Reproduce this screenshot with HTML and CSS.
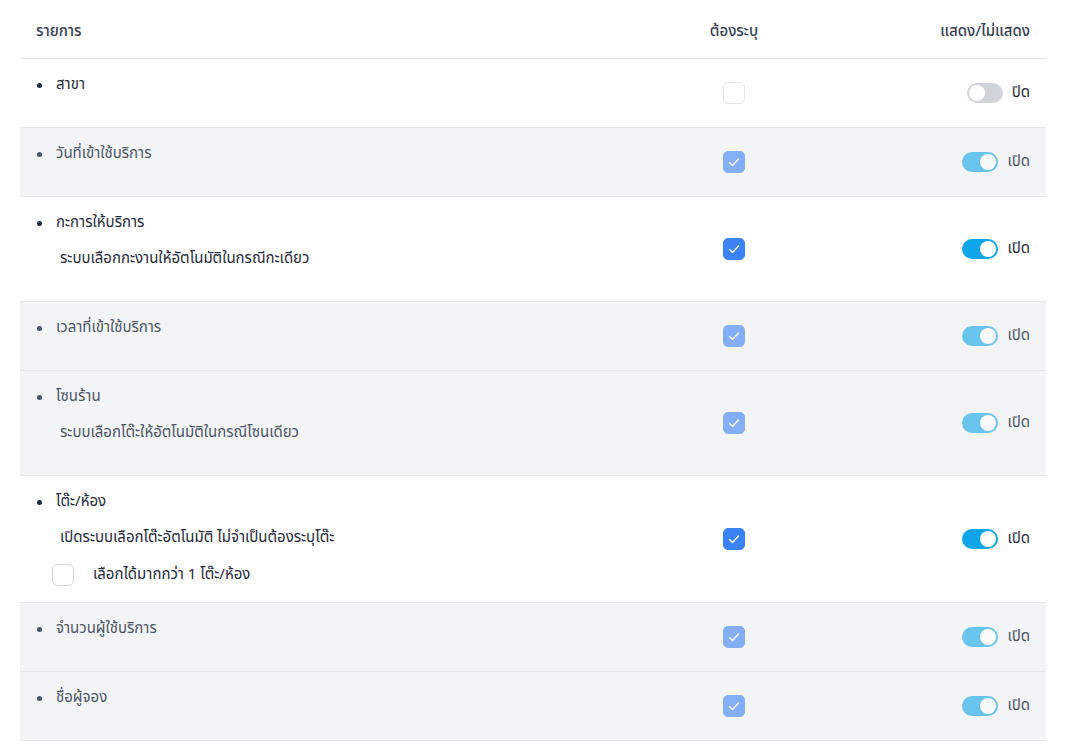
FILE: index.html
```html
<!DOCTYPE html>
<html lang="th">
<head>
<meta charset="utf-8">
<title>ตั้งค่าฟิลด์</title>
<link rel="stylesheet" href="styles.css">
</head>
<body>
<div class="table">
  <div class="row head">
    <div class="cell name">รายการ</div>
    <div class="cell req">ต้องระบุ</div>
    <div class="cell show">แสดง/ไม่แสดง</div>
  </div>

  <div class="row">
    <div class="cell name"><div class="title">สาขา</div></div>
    <div class="cell req"><span class="cb"></span></div>
    <div class="cell show"><span class="tg"></span><span class="tg-label">ปิด</span></div>
  </div>

  <div class="row disabled">
    <div class="cell name"><div class="title">วันที่เข้าใช้บริการ</div></div>
    <div class="cell req"><span class="cb on"><svg viewBox="0 0 22 22"><path d="M6.5 11.5l3 3 6-6.5"/></svg></span></div>
    <div class="cell show"><span class="tg on"></span><span class="tg-label">เปิด</span></div>
  </div>

  <div class="row">
    <div class="cell name"><div class="title">กะการให้บริการ</div><div class="desc">ระบบเลือกกะงานให้อัตโนมัติในกรณีกะเดียว</div></div>
    <div class="cell req"><span class="cb on"><svg viewBox="0 0 22 22"><path d="M6.5 11.5l3 3 6-6.5"/></svg></span></div>
    <div class="cell show"><span class="tg on"></span><span class="tg-label">เปิด</span></div>
  </div>

  <div class="row disabled">
    <div class="cell name"><div class="title">เวลาที่เข้าใช้บริการ</div></div>
    <div class="cell req"><span class="cb on"><svg viewBox="0 0 22 22"><path d="M6.5 11.5l3 3 6-6.5"/></svg></span></div>
    <div class="cell show"><span class="tg on"></span><span class="tg-label">เปิด</span></div>
  </div>

  <div class="row disabled">
    <div class="cell name"><div class="title">โซนร้าน</div><div class="desc">ระบบเลือกโต๊ะให้อัตโนมัติในกรณีโซนเดียว</div></div>
    <div class="cell req"><span class="cb on"><svg viewBox="0 0 22 22"><path d="M6.5 11.5l3 3 6-6.5"/></svg></span></div>
    <div class="cell show"><span class="tg on"></span><span class="tg-label">เปิด</span></div>
  </div>

  <div class="row">
    <div class="cell name"><div class="title">โต๊ะ/ห้อง</div><div class="desc">เปิดระบบเลือกโต๊ะอัตโนมัติ ไม่จำเป็นต้องระบุโต๊ะ</div><label class="opt"><span class="cb"></span><span>เลือกได้มากกว่า 1 โต๊ะ/ห้อง</span></label></div>
    <div class="cell req"><span class="cb on"><svg viewBox="0 0 22 22"><path d="M6.5 11.5l3 3 6-6.5"/></svg></span></div>
    <div class="cell show"><span class="tg on"></span><span class="tg-label">เปิด</span></div>
  </div>

  <div class="row disabled">
    <div class="cell name"><div class="title">จำนวนผู้ใช้บริการ</div></div>
    <div class="cell req"><span class="cb on"><svg viewBox="0 0 22 22"><path d="M6.5 11.5l3 3 6-6.5"/></svg></span></div>
    <div class="cell show"><span class="tg on"></span><span class="tg-label">เปิด</span></div>
  </div>

  <div class="row disabled">
    <div class="cell name"><div class="title">ชื่อผู้จอง</div></div>
    <div class="cell req"><span class="cb on"><svg viewBox="0 0 22 22"><path d="M6.5 11.5l3 3 6-6.5"/></svg></span></div>
    <div class="cell show"><span class="tg on"></span><span class="tg-label">เปิด</span></div>
  </div>
</div>
</body>
</html>
```

FILE: styles.css
```css
html, body {
  margin: 0;
  padding: 0;
  background: #ffffff;
}
body {
  font-family: "Noto Sans Thai", "Noto Sans", "DejaVu Sans", sans-serif;
  font-size: 15px;
  color: #1f2937;
}
.table {
  margin: 0 22px 0 20px;
}
.row {
  display: grid;
  grid-template-columns: 1fr 120px 252px;
  border-bottom: 1px solid #e5e7eb;
}
.cell {
  padding: 16px;
  line-height: 20px;
}
.head .cell {
  padding: 22px 16px 16px;
  color: #374151;
  font-weight: 500;
}
.head .req { text-align: center; }
.head .show { text-align: right; }
.row:not(.head) .req {
  display: flex;
  align-items: center;
  justify-content: center;
}
.row:not(.head) .show {
  display: flex;
  align-items: center;
  justify-content: flex-end;
  gap: 9px;
}
.title {
  position: relative;
  padding-left: 20px;
  margin-bottom: 16px;
}
.title::before {
  content: "";
  position: absolute;
  left: 1px;
  top: 8px;
  width: 5px;
  height: 5px;
  border-radius: 50%;
  background: currentColor;
}
.desc {
  padding-left: 24px;
  margin-bottom: 16px;
}
.opt {
  display: flex;
  align-items: center;
  gap: 19px;
  padding-left: 16px;
  height: 22px;
}
.cb {
  display: inline-block;
  width: 22px;
  height: 22px;
  box-sizing: border-box;
  border: 1.5px solid #e5e7eb;
  border-radius: 5px;
  background: #fff;
  flex: none;
}
.opt .cb { border-color: #d1d5db; }
.cb.on {
  background: #3b82f6;
  border-color: #3b82f6;
}
.cb svg {
  display: block;
  width: 22px;
  height: 22px;
  margin: -1.5px;
  fill: none;
  stroke: #fff;
  stroke-width: 1.4;
  stroke-linecap: round;
  stroke-linejoin: round;
}
.tg {
  position: relative;
  display: inline-block;
  width: 36px;
  height: 20px;
  border-radius: 10px;
  background: #d1d5db;
}
.tg::after {
  content: "";
  position: absolute;
  top: 2px;
  left: 2px;
  width: 16px;
  height: 16px;
  border-radius: 50%;
  background: #fff;
}
.tg.on { background: #0ea5e9; }
.tg.on::after { left: 18px; }
.tg-label {
  color: #1f2937;
}
.disabled {
  background: #f3f4f6;
}
.disabled .name,
.disabled .tg-label {
  color: #4b5563;
}
.disabled .cb,
.disabled .tg {
  opacity: 0.6;
}
```
